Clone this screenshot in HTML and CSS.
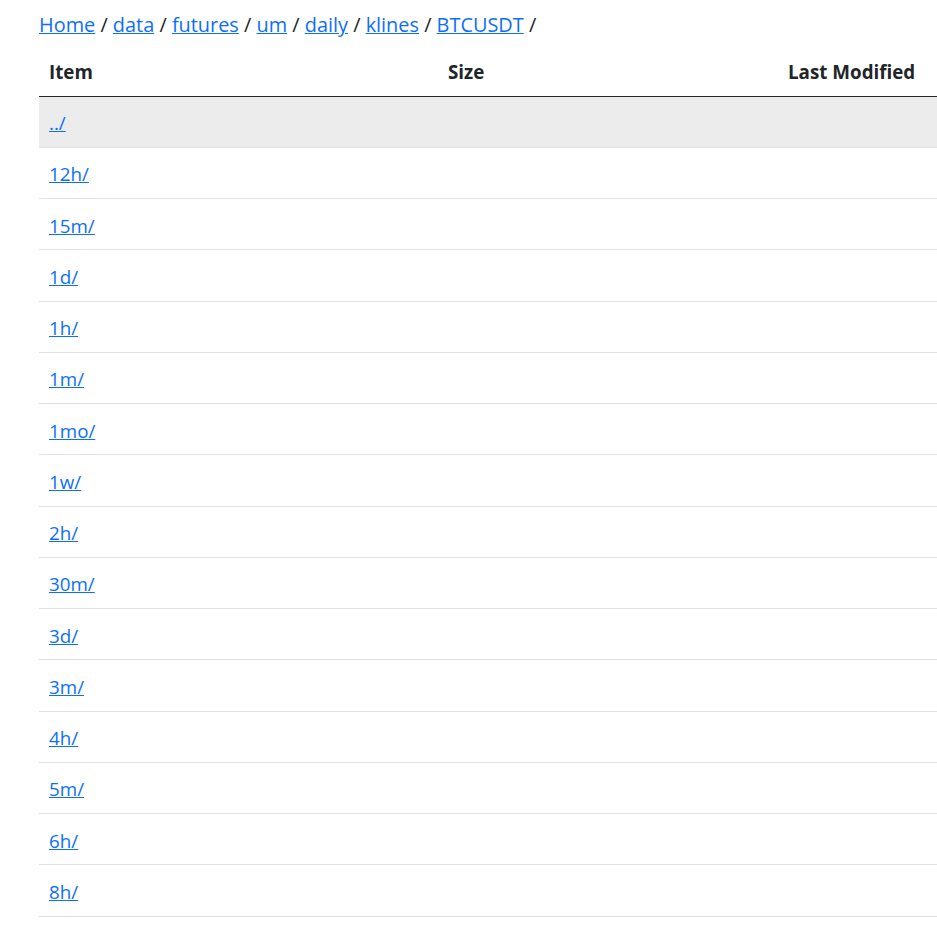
FILE: index.html
```html
<!DOCTYPE html>
<html>
<head>
<meta charset="utf-8">
<link rel="stylesheet" href="styles.css">
</head>
<body>
<div class="page">
  <nav class="crumbs">
    <a href="#">Home</a> / <a href="#">data</a> / <a href="#">futures</a> / <a href="#">um</a> / <a href="#">daily</a> / <a href="#">klines</a> / <a href="#">BTCUSDT</a> /
  </nav>
  <table class="listing">
    <colgroup><col class="c-item"><col class="c-size"><col class="c-mod"></colgroup>
    <thead>
      <tr><th>Item</th><th>Size</th><th>Last Modified</th></tr>
    </thead>
    <tbody>
      <tr class="up"><td><a href="#">../</a></td><td></td><td></td></tr>
      <tr><td><a href="#">12h/</a></td><td></td><td></td></tr>
      <tr><td><a href="#">15m/</a></td><td></td><td></td></tr>
      <tr><td><a href="#">1d/</a></td><td></td><td></td></tr>
      <tr><td><a href="#">1h/</a></td><td></td><td></td></tr>
      <tr><td><a href="#">1m/</a></td><td></td><td></td></tr>
      <tr><td><a href="#">1mo/</a></td><td></td><td></td></tr>
      <tr><td><a href="#">1w/</a></td><td></td><td></td></tr>
      <tr><td><a href="#">2h/</a></td><td></td><td></td></tr>
      <tr><td><a href="#">30m/</a></td><td></td><td></td></tr>
      <tr><td><a href="#">3d/</a></td><td></td><td></td></tr>
      <tr><td><a href="#">3m/</a></td><td></td><td></td></tr>
      <tr><td><a href="#">4h/</a></td><td></td><td></td></tr>
      <tr><td><a href="#">5m/</a></td><td></td><td></td></tr>
      <tr><td><a href="#">6h/</a></td><td></td><td></td></tr>
      <tr><td><a href="#">8h/</a></td><td></td><td></td></tr>
    </tbody>
  </table>
</div>
</body>
</html>
```
FILE: styles.css
```css
html, body {
  margin: 0;
  padding: 0;
  background: #fff;
}
body {
  font-family: "Open Sans", "Noto Sans", sans-serif;
  font-size: 18.8px;
  color: #212529;
  overflow: hidden;
}
.page {
  padding-left: 39px;
}
a {
  color: #0d6efd;
  text-decoration: underline;
}
.crumbs {
  height: 48px;
  line-height: 50px;
  font-size: 19.9px;
  color: #212529;
}
.listing {
  width: 898px;
  border-collapse: collapse;
  table-layout: fixed;
}
.c-item { width: 399px; }
.c-size { width: 340px; }
.listing th {
  text-align: left;
  font-weight: 700;
  height: 48px;
  padding: 0 10px;
  box-sizing: border-box;
  border-bottom: 1px solid #212529;
  vertical-align: middle;
}
.listing td {
  height: 51.25px;
  padding: 3px 10px 0;
  box-sizing: border-box;
  border-bottom: 1px solid #dee2e6;
  vertical-align: middle;
}
.listing tr.up td {
  background: #ececec;
}
```
